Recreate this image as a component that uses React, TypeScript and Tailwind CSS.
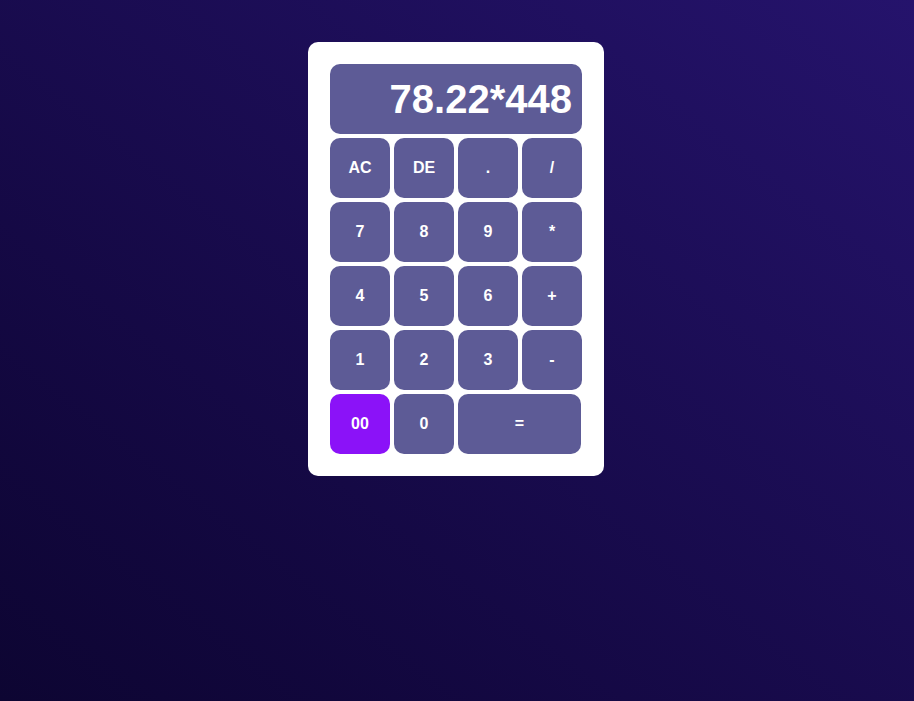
import React from 'react';

const keys: { label: string; kind?: 'accent' | 'wide' }[] = [
  { label: 'AC' }, { label: 'DE' }, { label: '.' }, { label: '/' },
  { label: '7' }, { label: '8' }, { label: '9' }, { label: '*' },
  { label: '4' }, { label: '5' }, { label: '6' }, { label: '+' },
  { label: '1' }, { label: '2' }, { label: '3' }, { label: '-' },
  { label: '00', kind: 'accent' }, { label: '0' }, { label: '=', kind: 'wide' },
];

export default function App() {
  return (
    <div
      className="min-h-[701px] w-full bg-gradient-to-tr from-[#0d0532] to-[#25136c] flex justify-center items-start pt-[42px] pr-[2px]"
      style={{ fontFamily: '"Liberation Sans", Arial, sans-serif' }}
    >
      <div className="w-[296px] bg-white rounded-[10px] p-[22px]">
        <div className="h-[70px] w-[252px] bg-[#5d5b96] rounded-[10px] flex items-center justify-end pr-[10px] mb-[4px]">
          <span className="text-[40px] font-bold text-white leading-none">78.22*448</span>
        </div>
        <div className="grid grid-cols-[60px_60px_60px_60px] gap-[4px]">
          {keys.map((k) => (
            <button
              key={k.label}
              className={`h-[60px] rounded-[10px] text-white font-bold text-[16px] flex items-center justify-center ${
                k.kind === 'accent' ? 'bg-[#8b12f8]' : 'bg-[#5d5b96]'
              } ${k.kind === 'wide' ? 'col-span-2 w-[123px]' : 'w-[60px]'}`}
            >
              {k.label}
            </button>
          ))}
        </div>
      </div>
    </div>
  );
}
